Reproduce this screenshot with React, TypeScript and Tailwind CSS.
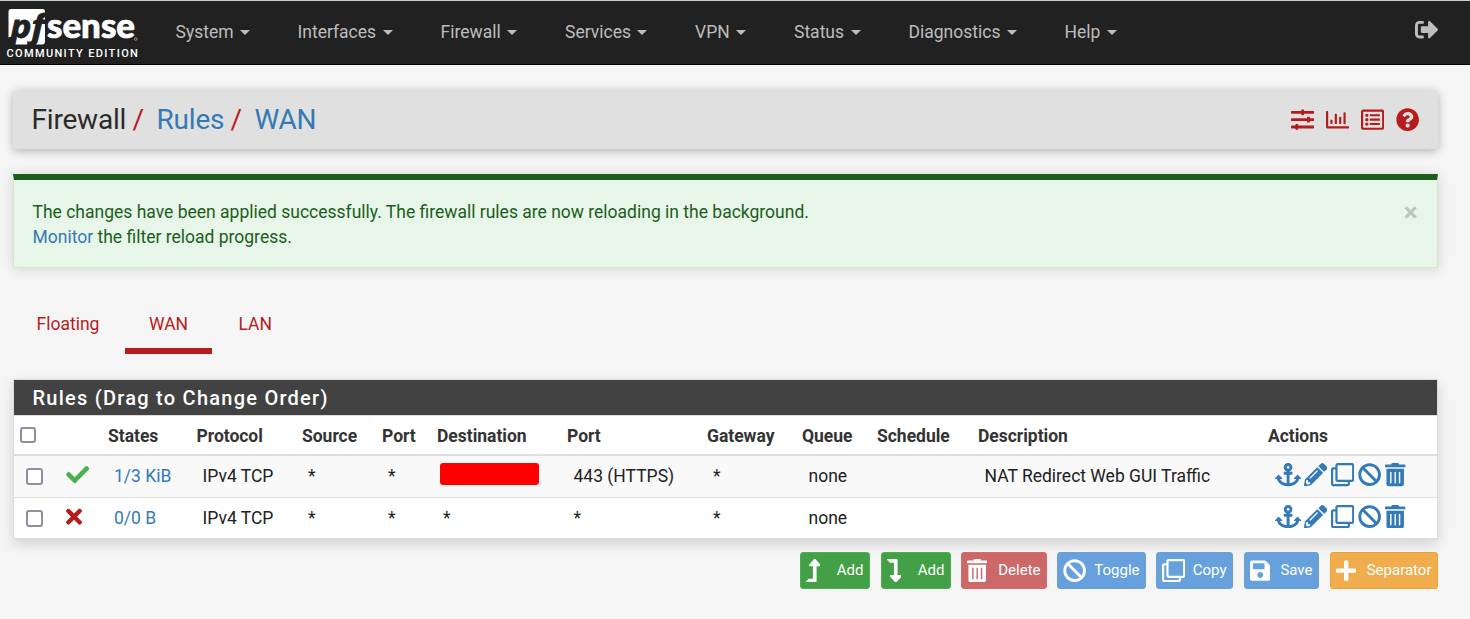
import React from "react";
import {
  FaAnchor,
  FaBan,
  FaCheck,
  FaLevelDownAlt,
  FaLevelUpAlt,
  FaPencilAlt,
  FaPlus,
  FaQuestionCircle,
  FaRegChartBar,
  FaRegClone,
  FaRegListAlt,
  FaSave,
  FaSignOutAlt,
  FaSlidersH,
  FaTimes,
  FaTrashAlt,
} from "react-icons/fa";

const menus = [
  { label: "System", width: "w-[122px]" },
  { label: "Interfaces", width: "w-[143px]" },
  { label: "Firewall", width: "w-[124.5px]" },
  { label: "Services", width: "w-[130px]" },
  { label: "VPN", width: "w-[99px]" },
  { label: "Status", width: "w-[114.5px]" },
  { label: "Diagnostics", width: "w-[156px]" },
  { label: "Help", width: "w-[100px]" },
];

function Logo() {
  return (
    <svg width="134" height="42" viewBox="0 0 134 42" className="block overflow-visible">
      <path d="M4 2H35.500q2.500 0 2.500 2.500v30q0 3-3 3H5.500L1.500 31V4.500Q1.500 2 4 2z" fill="#fff" />
      <path d="M1.500 30L6 30L4.500 38.500L1.500 38.500z" fill="#212121" />
      <text x="3.500" y="30.500" fontFamily="Open Sans" fontWeight="700" fontStyle="italic" fontSize="32" fill="#212121" stroke="#212121" strokeWidth="0.900" textLength="34" lengthAdjust="spacingAndGlyphs">pf</text>
      <text x="40" y="31" fontFamily="Lato" fontWeight="900" fontSize="35" fill="#fff" stroke="#fff" strokeWidth="0.700" textLength="88" lengthAdjust="spacingAndGlyphs">sense</text>
      <circle cx="128.700" cy="32" r="1.300" fill="none" stroke="#aaa" strokeWidth="0.800" />
    </svg>
  );
}

function Navbar() {
  return (
    <header className="flex h-[65px] border-t border-b border-t-[#c9cccb] border-b-black bg-[#212121] pt-px">
      <div className="w-[175px] shrink-0 pt-[5px] pl-[6.5px]">
        <Logo />
        <div className="-mt-[3px] pt-px text-[11px] leading-[14px] font-medium tracking-[1.35px] whitespace-nowrap text-white">
          COMMUNITY EDITION
        </div>
      </div>
      <nav className="mt-[18px] flex h-[25px] flex-1 text-[17.5px] leading-[25px] text-[#bdbdbd]">
        {menus.map((m) => (
          <a key={m.label} className={`flex shrink-0 items-center pl-[0.5px] ${m.width}`}>
            {m.label}
            <span className="ml-[6.5px] border-x-[5px] border-t-[5px] border-x-transparent border-t-[#bdbdbd]" />
          </a>
        ))}
      </nav>
      <FaSignOutAlt className="mt-4 mr-[32px] size-[23.3px] text-[#bdbdbd]" />
    </header>
  );
}

function Box() {
  return <span className="block size-[17px] rounded-[3px] border-2 border-[#8f8f9d] bg-white" />;
}

const columns = [
  "w-[39px]", "w-[49px]", "w-[88.5px]", "w-[105.5px]", "w-[80px]", "w-[55px]", "w-[130px]",
  "w-[140px]", "w-[95px]", "w-[75px]", "w-[101px]", "w-[290px]", "w-[175px]",
];

const headings = [
  "States", "Protocol", "Source", "Port", "Destination", "Port", "Gateway", "Queue", "Schedule", "Description", "Actions",
];

const rules = [
  { pass: true, states: "1/3 KiB", dest: null, port: "443 (HTTPS)", desc: "NAT Redirect Web GUI Traffic" },
  { pass: false, states: "0/0 B", dest: "*", port: "*", desc: "" },
];

function RulesTable() {
  return (
    <section className="mt-[25px] mr-[32px] ml-[13px] border border-[#dddddd] bg-white shadow-[0_5px_12px_rgba(0,0,0,0.14)]">
      <h2 className="h-[35px] bg-[#424242] pt-[3px] pl-[18.5px] text-[20px] leading-[30px] font-medium tracking-[1.25px] text-white">
        Rules (Drag to Change Order)
      </h2>
      <table className="w-full table-fixed border-separate border-spacing-0 text-left text-[17.5px] leading-[24px] text-[#212121]">
        <colgroup>
          {columns.map((c, i) => (
            <col key={i} className={c} />
          ))}
        </colgroup>
        <thead>
          <tr className="h-[41px] *:border-t *:border-b-2 *:border-[#dddddd]">
            <th className="pl-1.5"><span className="block size-4 rounded-[3px] border-2 border-[#8f8f9d] bg-white" /></th>
            <th />
            {headings.map((h, i) => (
              <th key={i} className="pt-0.5 pl-1.5 font-bold tracking-[-0.02px] text-[#333333]">{h}</th>
            ))}
          </tr>
        </thead>
        <tbody>
          {rules.map((r) => (
            <tr key={r.states} className="h-[42px] *:border-b *:border-[#dddddd] odd:bg-[#f9f9f9] odd:*:pb-[2px] last:h-[40px] last:*:border-b-0">
              <td className={`pl-3 ${r.pass ? "pt-0.5" : "pt-0"}`}><Box /></td>
              <td className="pl-[13px]">
                {r.pass ? <FaCheck className="-mt-[1px] size-[23.3px] text-[#4caf50]" /> : <FaTimes className="-mt-[3px] h-[23.3px] w-4 text-[#b71c1c]" />}
              </td>
              <td className="pl-3 text-[#337ab7]">{r.states}</td>
              <td className="pl-3">IPv4 TCP</td>
              <td className="pl-3">*</td>
              <td className="pl-3">*</td>
              <td className="pl-3">
                {r.dest ?? <span className="-mt-1 -ml-[3px] block h-[22px] w-[99px] rounded-[3px] bg-[#ff0000]" />}
              </td>
              <td className="pl-[12.5px]">{r.port}</td>
              <td className="pl-3">*</td>
              <td className="pl-[12.5px]">none</td>
              <td />
              <td className="pl-[12.5px]">{r.desc}</td>
              <td className="pl-[12.7px]">
                <div className={`flex items-center text-[#337ab7] ${r.pass ? "-mt-px" : "-mt-[3px]"}`}>
                  <FaAnchor className="mr-[3px] h-[23.3px] w-[26.2px]" />
                  <FaPencilAlt className="mr-[3.8px] size-[23.3px]" />
                  <FaRegClone className="mr-[3.8px] size-[23.3px]" />
                  <FaBan className="mr-[3.8px] size-[23.3px]" />
                  <FaTrashAlt className="h-[23.3px] w-[20.4px]" />
                </div>
              </td>
            </tr>
          ))}
        </tbody>
      </table>
    </section>
  );
}

const buttons = [
  { label: "Add", icon: <FaLevelUpAlt className="h-[23.3px] w-[14.6px]" />, style: "w-[70px] mr-[11px] bg-[#43a047] border-[#4caf50]" },
  { label: "Add", icon: <FaLevelDownAlt className="h-[23.3px] w-[14.6px]" />, style: "w-[70px] mr-[10px] bg-[#43a047] border-[#4caf50]" },
  { label: "Delete", icon: <FaTrashAlt className="h-[23.3px] w-[20.4px]" />, style: "w-[86px] mr-[10px] bg-[#cd6868] border-[#d46a6a]" },
  { label: "Toggle", icon: <FaBan className="size-[23.3px]" />, style: "w-[89px] mr-[10px] bg-[#66a1de] border-[#709fcc]" },
  { label: "Copy", icon: <FaRegClone className="size-[23.3px]" />, style: "w-[77px] mr-[11px] bg-[#66a1de] border-[#709fcc]" },
  { label: "Save", icon: <FaSave className="h-[23.3px] w-[20.4px]" />, style: "w-[75px] mr-[11px] bg-[#66a1de] border-[#709fcc]" },
  { label: "Separator", icon: <FaPlus className="h-[23.3px] w-[20.4px]" />, style: "w-[108px] bg-[#f0ad4e] border-[#eea236]" },
];

export default function App() {
  return (
    <div className="h-[619px] overflow-hidden bg-[#f5f5f5] font-[Roboto,sans-serif] text-[#212121]">
      <Navbar />

      <div className="mt-[25px] mr-[32px] ml-[13px] flex h-[59px] items-center rounded-[4px] bg-[#e0e0e0] pr-[18.7px] pl-[18.5px] shadow-[0_2px_10px_rgba(0,0,0,0.28)]">
        <h1 className="flex flex-1 text-[28px] leading-[40px] tracking-[-0.2px]">
          <span className="w-[101px] text-[#2b2b2b]">Firewall</span>
          <span className="w-[24px] text-[#b71c1c]">/</span>
          <a className="w-[74px] text-[#337ab7]">Rules</a>
          <span className="w-[24px] text-[#b71c1c]">/</span>
          <a className="text-[#337ab7]">WAN</a>
        </h1>
        <div className="flex gap-[11.7px] text-[#b71c1c]">
          <FaSlidersH className="size-[23.3px]" />
          <FaRegChartBar className="size-[23.3px]" />
          <FaRegListAlt className="size-[23.3px]" />
          <FaQuestionCircle className="size-[23.3px]" />
        </div>
      </div>

      <div className="mt-[25px] mr-[32px] ml-[13px] flex h-[94px] border border-t-[6px] border-[#d6e9c6] border-t-[#1b5e20] bg-[#e8f5e9] pt-[19px] pl-[18.5px] text-[17.5px] leading-[25px] text-[#1b5e20] shadow-[0_1px_12px_rgba(0,0,0,0.14)]">
        <p className="flex-1 pt-px">
          The changes have been applied successfully. The firewall rules are now reloading in the background.
          <br />
          <a className="text-[#337ab7]">Monitor</a> the filter reload progress.
        </p>
        <span className="mr-[19.5px] text-[26px] leading-[26px] font-bold text-[#bac4ba]">×</span>
      </div>

      <div className="mt-[31px] ml-[12px] flex h-[55px] text-[17.5px] leading-[25px] text-[#b71c1c]">
        <a className="w-[113px] pt-[13px] pl-[24.5px]">Floating</a>
        <a className="w-[87px] border-b-[6px] border-[#b71c1c] pt-[13px] pl-6">WAN</a>
        <a className="pt-[13px] pl-[26.5px]">LAN</a>
      </div>

      <RulesTable />

      <div className="mt-[13px] mr-[32px] flex justify-end text-white">
        {buttons.map((b, i) => (
          <button key={i} className={`flex h-[37px] items-center justify-between rounded-[3px] border pr-[5.5px] pl-[4.5px] text-[15px] leading-[22px] ${b.style}`}>
            {b.icon}
            <span className="pb-[2px]">{b.label}</span>
          </button>
        ))}
      </div>
    </div>
  );
}
